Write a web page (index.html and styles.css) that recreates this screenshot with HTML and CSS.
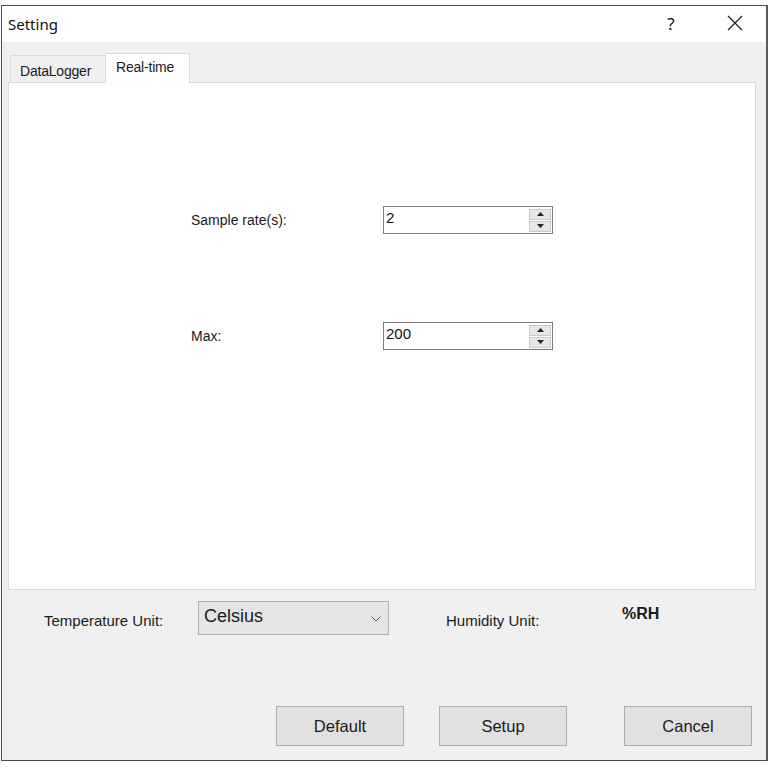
FILE: index.html
```html
<!DOCTYPE html>
<html>
<head>
<meta charset="utf-8">
<link rel="stylesheet" href="styles.css">
</head>
<body>
<div class="window">
  <div class="titlebar">
    <span class="title">Setting</span>
    <span class="help">?</span>
    <span class="close">
      <svg width="16" height="16" viewBox="0 0 16 16"><path d="M1 1 L15 15 M15 1 L1 15" stroke="#222" stroke-width="1.3" fill="none"/></svg>
    </span>
  </div>
  <div class="content">
    <div class="tabs">
      <div class="tab">DataLogger</div>
      <div class="tab active">Real-time</div>
    </div>
    <div class="panel">
      <div class="field first">
        <span class="flabel">Sample rate(s):</span>
        <div class="spin">
          <span class="val">2</span>
          <div class="arrows">
            <span class="arr"><svg width="7" height="4" viewBox="0 0 7 4"><path d="M0 4 L3.5 0 L7 4 Z" fill="#222"/></svg></span>
            <span class="arr"><svg width="7" height="4" viewBox="0 0 7 4"><path d="M0 0 L3.5 4 L7 0 Z" fill="#222"/></svg></span>
          </div>
        </div>
      </div>
      <div class="field second">
        <span class="flabel">Max:</span>
        <div class="spin">
          <span class="val">200</span>
          <div class="arrows">
            <span class="arr"><svg width="7" height="4" viewBox="0 0 7 4"><path d="M0 4 L3.5 0 L7 4 Z" fill="#222"/></svg></span>
            <span class="arr"><svg width="7" height="4" viewBox="0 0 7 4"><path d="M0 0 L3.5 4 L7 0 Z" fill="#222"/></svg></span>
          </div>
        </div>
      </div>
    </div>
    <div class="units">
      <span class="ulabel temp">Temperature Unit:</span>
      <div class="combo">
        <span>Celsius</span>
        <svg width="10" height="6" viewBox="0 0 10 6"><path d="M0.5 0.5 L5 5 L9.5 0.5" stroke="#555" stroke-width="1" fill="none"/></svg>
      </div>
      <span class="ulabel hum">Humidity Unit:</span>
      <span class="rh">%RH</span>
    </div>
    <div class="buttons">
      <button class="btn">Default</button>
      <button class="btn setup">Setup</button>
      <button class="btn cancel">Cancel</button>
    </div>
  </div>
</div>
</body>
</html>
```

FILE: styles.css
```css
* { box-sizing: border-box; }
html, body { margin: 0; padding: 0; background: #ffffff; }
body { font-family: "Liberation Sans", Arial, sans-serif; color: #1a1a1a; }

.window {
  margin: 5px 0 0 1px;
  width: 767px;
  height: 756px;
  border: 1px solid #4a4a4a;
  border-right: 2px solid #5a5a5a;
  background: #f0f0f0;
  display: flex;
  flex-direction: column;
}

.titlebar {
  height: 36px;
  background: #ffffff;
  display: flex;
  align-items: center;
  flex-shrink: 0;
}
.title {
  font-family: "Noto Sans", "Open Sans", sans-serif;
  font-size: 15px;
  padding-left: 6px;
  margin-top: -1px;
  color: #111;
}
.help {
  margin-left: auto;
  font-family: "Noto Sans", sans-serif;
  font-size: 17px;
  width: 16px;
  text-align: center;
  margin-right: 48px;
  margin-top: -1px;
  color: #111;
}
.close {
  display: flex;
  width: 16px;
  margin-right: 23px;
  margin-top: -2px;
}

.content {
  flex: 1;
  display: flex;
  flex-direction: column;
}

.tabs {
  display: flex;
  align-items: flex-end;
  margin-top: 10px;
  padding-left: 8px;
  height: 30px;
  position: relative;
  z-index: 1;
}
.tab {
  height: 27px;
  padding: 0 6px 0 9px;
  border: 1px solid #d9d9d9;
  border-bottom: none;
  background: #f0f0f0;
  font-size: 14px;
  display: flex;
  align-items: center;
  letter-spacing: -0.2px;
}
.tab.active {
  height: 30px;
  background: #ffffff;
  padding: 0 10px 4px 10px;
  margin-bottom: -1px;
  border-left: none;
  width: 84px;
}
.tab:first-child { width: 96px; padding-top: 4px; }

.panel {
  margin-left: 6px;
  width: 748px;
  height: 508px;
  background: #ffffff;
  border: 1px solid #dadada;
  padding-left: 182px;
  padding-top: 123px;
}

.field {
  display: flex;
  align-items: center;
  height: 28px;
}
.field.second { margin-top: 88px; }
.flabel {
  width: 192px;
  font-size: 14px;
  color: #1a1a1a;
}
.spin {
  width: 170px;
  height: 28px;
  border: 1px solid #7a7a7a;
  display: flex;
  align-items: center;
  background: #fff;
}
.val {
  flex: 1;
  padding-left: 2px;
  font-size: 15px;
  color: #111;
  margin-top: -5px;
}
.arrows {
  display: flex;
  flex-direction: column;
  width: 22px;
  margin-right: 1px;
  gap: 1px;
}
.arr {
  height: 11px;
  background: #e6e6e6;
  border: 1px solid #c9c9c9;
  display: flex;
  align-items: center;
  justify-content: center;
}

.units {
  display: flex;
  align-items: center;
  margin-top: 11px;
  height: 34px;
}
.ulabel {
  font-size: 15px;
  color: #1a1a1a;
  margin-top: 5px;
}
.ulabel.temp { margin-left: 42px; width: 154px; }
.combo {
  width: 191px;
  height: 34px;
  background: #e5e5e5;
  border: 1px solid #adadad;
  display: flex;
  align-items: center;
  justify-content: space-between;
  padding: 0 7px 2px 5px;
  font-size: 18px;
  color: #1a1a1a;
}
.combo span { margin-top: -2px; }
.combo svg { margin-top: 4px; }
.ulabel.hum { margin-left: 57px; width: 176px; }
.rh {
  font-weight: bold;
  font-size: 16px;
  margin-top: -9px;
}

.buttons {
  display: flex;
  margin-top: 71px;
  padding-left: 274px;
}
.btn {
  width: 128px;
  height: 40px;
  background: #e1e1e1;
  border: 1px solid #adadad;
  font-family: "Liberation Sans", Arial, sans-serif;
  font-size: 16.5px;
  color: #1a1a1a;
  padding: 0;
}
.btn.setup { margin-left: 35px; }
.btn.cancel { margin-left: 57px; }
```
